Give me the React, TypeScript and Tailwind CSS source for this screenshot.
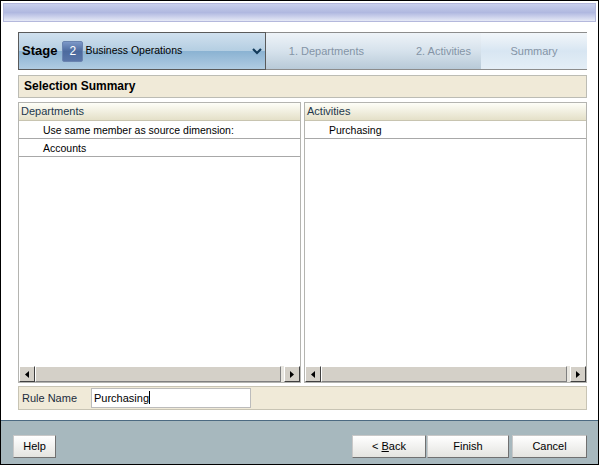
import React from "react";

const font = { fontFamily: '"Liberation Sans", Arial, sans-serif' };

function ScrollArrow({ dir }: { dir: "left" | "right" }) {
  return (
    <div className="w-[16px] h-[16px] bg-[#d4d0c8] border border-t-white border-l-white border-r-[#404040] border-b-[#404040] flex items-center justify-center">
      <svg width="4" height="7" viewBox="0 0 4 7">
        {dir === "left" ? <path d="M4 0 L0 3.5 L4 7 Z" fill="#000" /> : <path d="M0 0 L4 3.5 L0 7 Z" fill="#000" />}
      </svg>
    </div>
  );
}

function ScrollBar() {
  return (
    <div className="h-[16px] bg-[#e8e6e0] flex">
      <ScrollArrow dir="left" />
      <div className="flex-1 mr-[3px] bg-[#d4d0c8] border border-t-white border-l-white border-r-[#808080] border-b-[#808080]" />
      <ScrollArrow dir="right" />
    </div>
  );
}

function Panel({ title, rows, className }: { title: string; rows: string[]; className: string }) {
  return (
    <div className={`${className} flex flex-col border border-[#b4b4b0] bg-white`}>
      <div className="h-[18px] shrink-0 bg-gradient-to-b from-[#fefef8] to-[#e4e0c8] border-b border-[#c8c4b0] pl-[2px] text-[11px] leading-[17px] text-[#23384c]">
        {title}
      </div>
      {rows.map((r) => (
        <div key={r} className="h-[18px] shrink-0 border-b border-[#a8a8a8] pl-[24px] text-[10.5px] leading-[18px] text-black">
          {r}
        </div>
      ))}
      <div className="flex-1" />
      <ScrollBar />
    </div>
  );
}

function Button({ label, className }: { label: React.ReactNode; className: string }) {
  return (
    <button className={`${className} h-[23px] bg-gradient-to-b from-white to-[#e4e4e0] border border-t-[#c8c8c8] border-l-[#c8c8c8] border-r-[#707070] border-b-[#707070] text-[11px] text-black`}>
      {label}
    </button>
  );
}

export default function App() {
  return (
    <div className="w-[599px] h-[465px] border border-black bg-white flex flex-col overflow-hidden" style={font}>
      {/* title strip */}
      <div className="mx-[2px] mt-[2px] h-[19px] shrink-0 border border-[#b4b8dc] bg-gradient-to-b from-[#c8cfec] via-[#b0b8e0] to-[#e6e9f6]" />

      <div className="flex-1 flex flex-col pl-[17px] pr-[11px] pt-[10px] pb-[10px] min-h-0">
        {/* stage bar */}
        <div className="h-[38px] shrink-0 flex border-y border-[#8c8c8c]">
          <div className="w-[248px] flex items-center border border-[#5a5a5a] -my-px bg-gradient-to-b from-[#d0e0ee] via-[#b4cee2] to-[#a8c6de] relative">
            <div className="absolute inset-x-0 bottom-0 h-1/2 bg-gradient-to-b from-[#8ab2d2] to-[#b0cce2]" />
            <span className="relative ml-[3px] font-bold text-[13px] text-black">Stage</span>
            <span className="relative ml-[5px] w-[21px] h-[21px] rounded-[2px] border border-[#6a84b0] bg-gradient-to-b from-[#7c98c8] via-[#4c6a9e] to-[#5a76a8] text-white text-[12px] leading-[19px] text-center">
              2
            </span>
            <span className="relative ml-[2px] text-[10.5px] text-black">Business Operations</span>
            <svg className="relative ml-auto mr-[3px]" width="10" height="7" viewBox="0 0 10 7">
              <path d="M1 1 L5 5 L9 1" stroke="#123a5a" strokeWidth="2.2" fill="none" />
            </svg>
          </div>
          <div className="flex-1 flex text-[11px] text-[#8494a6]">
            <div className="w-[215px] flex bg-gradient-to-b from-[#eef3f8] via-[#d6e2ec] to-[#b8cad8]">
              <span className="w-[98px] text-right leading-[36px]">1. Departments</span>
              <span className="flex-1 text-right pr-[10px] leading-[36px]">2. Activities</span>
            </div>
            <div className="flex-1 flex items-center justify-center bg-gradient-to-b from-[#f2f6fa] via-[#d8e6f2] to-[#e4eef6]">
              Summary
            </div>
          </div>
        </div>

        {/* selection summary */}
        <div className="mt-[5px] h-[23px] shrink-0 border border-[#bcbcb4] bg-[#f0ead8] pl-[5px] text-[12px] font-bold leading-[21px] text-black">
          Selection Summary
        </div>

        {/* panels */}
        <div className="mt-[4px] flex-1 flex gap-[3px] min-h-0">
          <Panel title="Departments" rows={["Use same member as source dimension:", "Accounts"]} className="w-[283px]" />
          <Panel title="Activities" rows={["Purchasing"]} className="flex-1" />
        </div>

        {/* rule name */}
        <div className="mt-[3px] h-[24px] shrink-0 flex items-center border border-[#c8c4b4] bg-[#f0ead8] text-[11px]">
          <span className="w-[72px] pl-[3px] text-[#1c2c3c]">Rule Name</span>
          <div className="w-[160px] h-[20px] bg-white border border-[#bcbcbc] pl-[2px] leading-[18px] text-black">
            Purchasing<span className="inline-block w-px h-[13px] bg-black align-[-2px]" />
          </div>
        </div>
      </div>

      {/* footer */}
      <div className="h-[44px] shrink-0 border-t border-[#4c6a82] bg-[#a7b8be] flex items-center pl-[12px] pr-[11px] pt-[8px]">
        <Button label="Help" className="w-[43px]" />
        <Button label={<span>&lt; <u>B</u>ack</span>} className="w-[74px] ml-auto" />
        <Button label="Finish" className="w-[82px] ml-[1px]" />
        <Button label="Cancel" className="w-[75px] ml-[3px]" />
      </div>
    </div>
  );
}
